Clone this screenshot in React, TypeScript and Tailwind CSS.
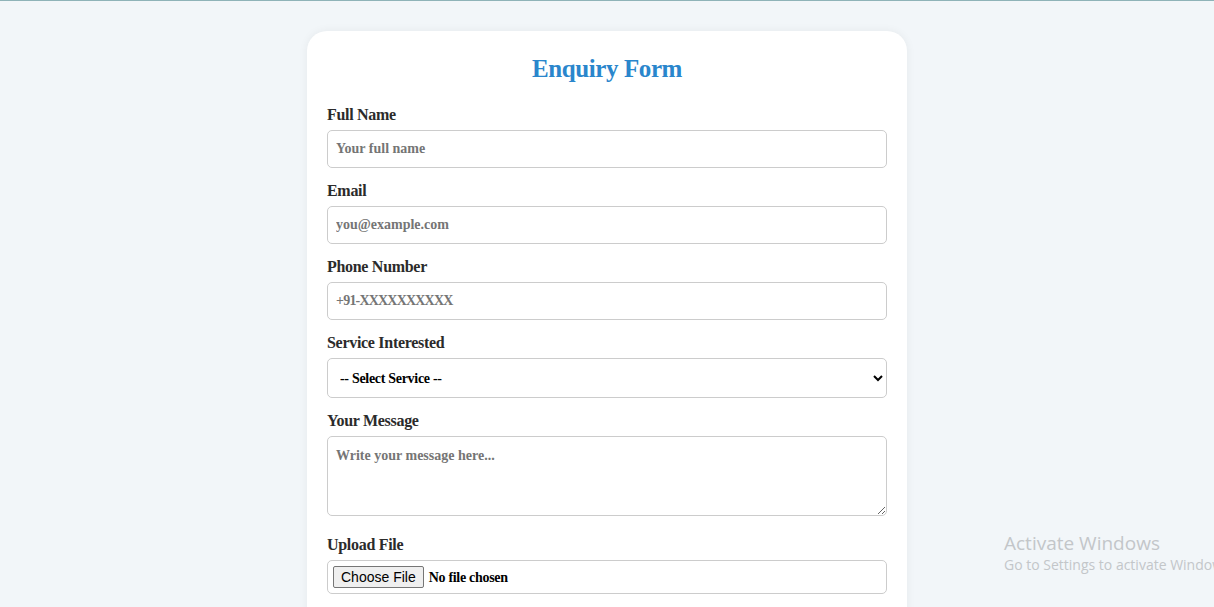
import React from 'react';

const Field: React.FC<{ label: string; children: React.ReactNode }> = ({ label, children }) => (
  <div className="mb-[13px]">
    <label className="block text-[16px] leading-[20px] font-bold text-[#2b2b2b] mb-[5px] tracking-[-0.3px]">{label}</label>
    {children}
  </div>
);

const inputCls =
  'block w-full h-[38px] px-2 border border-[#cccccc] rounded-[5px] text-[14px] font-bold text-[#333] placeholder:text-[#757575] bg-white outline-none';

export default function App() {
  return (
    <div className="min-h-[607px] bg-[#f2f6f9] border-t border-[#8fb3b8] pt-[30px] overflow-hidden relative font-['Liberation_Serif','DejaVu_Serif',serif]">
      <div className="w-[600px] mx-auto bg-white rounded-[20px] shadow-[0_0_10px_rgba(0,0,0,0.06)] px-5 pt-[23px] pb-10">
        <h2 className="text-center text-[25px] leading-[30px] font-bold text-[#2a86cc] mb-[21px] tracking-[-0.4px]">Enquiry Form</h2>
        <form>
          <Field label="Full Name">
            <input type="text" placeholder="Your full name" className={inputCls} />
          </Field>
          <Field label="Email">
            <input type="email" placeholder="you@example.com" className={inputCls} />
          </Field>
          <Field label="Phone Number">
            <input type="tel" placeholder="+91-XXXXXXXXXX" className={`${inputCls} tracking-[-0.8px]`} />
          </Field>
          <Field label="Service Interested">
            <select
              className="block w-full h-[40px] px-2 border border-[#cccccc] rounded-[5px] text-[14px] font-bold text-black bg-white outline-none tracking-[-0.3px]"
              defaultValue=""
            >
              <option value="">-- Select Service --</option>
              <option>Web Development</option>
              <option>App Development</option>
              <option>Digital Marketing</option>
            </select>
          </Field>
          <Field label="Your Message">
            <textarea
              placeholder="Write your message here..."
              className="w-full h-[80px] px-2 py-2 border border-[#cccccc] rounded-[5px] text-[14px] font-bold text-[#333] placeholder:text-[#757575] bg-white outline-none align-top mb-[6px]"
            />
          </Field>
          <Field label="Upload File">
            <input
              type="file"
              className="block w-full h-[34px] px-[5px] py-[5px] border border-[#cccccc] rounded-[5px] text-[14px] font-bold text-black bg-white tracking-[-0.3px] file:mr-[5px] file:px-[7px] file:py-0 file:h-[22px] file:border file:border-[#767676] file:rounded-[2px] file:bg-[#efefef] file:text-[14px] file:font-normal file:tracking-normal file:text-black file:font-['Liberation_Sans',Arial,sans-serif]"
            />
          </Field>
        </form>
      </div>

      <div className="absolute left-[1004px] top-[529px] text-[#c3c6c9] pointer-events-none whitespace-nowrap font-['Open_Sans','Noto_Sans',sans-serif]">
        <div className="text-[19px] leading-[26px]">Activate Windows</div>
        <div className="text-[14px] leading-[18px]">Go to Settings to activate Windows.</div>
      </div>
    </div>
  );
}
